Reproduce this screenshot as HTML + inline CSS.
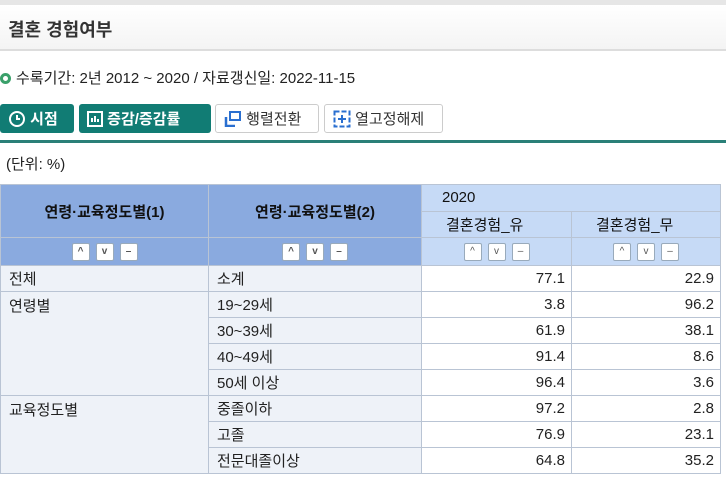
<!DOCTYPE html>
<html><head><meta charset="utf-8"><style>
*{margin:0;padding:0;box-sizing:border-box}
body{width:726px;height:480px;overflow:hidden;background:#fff;font-family:"Liberation Sans","Noto Sans CJK KR",sans-serif;color:#222;position:relative}
.top{position:absolute;left:0;top:0;width:726px;height:5px;background:#e6e6e6}
.title{position:absolute;left:0;top:5px;width:726px;height:46px;background:linear-gradient(#fff,#f4f4f4);border-bottom:2px solid #ddd;font-size:18px;font-weight:bold;padding:11px 0 0 8px;color:#333}
.info{position:absolute;left:0;top:67px;font-size:15px;color:#222}
.dot{display:inline-block;width:11px;height:11px;border-radius:50%;border:3px solid #3aa06a;margin-right:5px;vertical-align:-1px}
.btn{position:absolute;top:104px;height:29px;border-radius:3px;font-size:15px;display:flex;align-items:center;padding-left:8px}
.g{background:#117c74;color:#fff;font-weight:bold}
.w{background:#fff;border:1px solid #ccc;color:#333}
.line{position:absolute;left:0;top:140px;width:726px;height:3px;background:#2a8078}
.unit{position:absolute;left:6px;top:153px;font-size:15px}
table{position:absolute;left:0;top:184px;border-collapse:collapse;font-size:15px}
td,th{border:1px solid #b9c4d4;height:26px;padding:0 6px}
th{background:#8aaadf;color:#111;font-weight:bold}
th.l{background:#c6daf6;font-weight:normal;text-align:left;padding-left:20px}
tr.b th{background:#8aaadf;height:28px}
tr.b th.l{background:#c6daf6}
.sb{display:inline-block;width:18px;height:18px;background:#fff;border:1px solid #9ab;border-radius:2px;margin:0 3px;vertical-align:middle;font-size:10px;line-height:16px;text-align:center;color:#555}
td{background:#eef2f8;padding-left:8px}
td.n{background:#fff;text-align:right}
</style></head><body>
<div class="top"></div>
<div class="title">결혼 경험여부</div>
<div class="info"><span class="dot"></span>수록기간: 2년 2012 ~ 2020 / 자료갱신일: 2022-11-15</div>
<div class="btn g" style="left:0;width:74px"><svg width="18" height="18" viewBox="0 0 18 18"><circle cx="9" cy="9" r="7" fill="none" stroke="#fff" stroke-width="2"/><path d="M9 5v4h3" fill="none" stroke="#fff" stroke-width="2"/></svg>&nbsp;시점</div>
<div class="btn g" style="left:79px;width:132px"><svg width="16" height="16" viewBox="0 0 16 16"><rect x="1" y="1" width="14" height="14" fill="none" stroke="#fff" stroke-width="2"/><path d="M5 11V7M8 11V5M11 11V8" stroke="#fff" stroke-width="2"/></svg>&nbsp;증감/증감률</div>
<div class="btn w" style="left:215px;width:104px"><svg width="18" height="16" viewBox="0 0 18 16"><rect x="6" y="1" width="10" height="8" fill="none" stroke="#2a6fd0" stroke-width="2"/><path d="M2 6v9h9" fill="none" stroke="#2a6fd0" stroke-width="2.5"/></svg>&nbsp;행렬전환</div>
<div class="btn w" style="left:324px;width:119px"><svg width="18" height="18" viewBox="0 0 18 18"><rect x="1.5" y="1.5" width="15" height="15" fill="none" stroke="#2a6fd0" stroke-width="2" stroke-dasharray="5 2"/><path d="M9 5v8M5 9h8" stroke="#2a6fd0" stroke-width="2"/></svg>&nbsp;열고정해제</div>
<div class="line"></div>
<div class="unit">(단위: %)</div>
<table>
<tr><th rowspan="2" style="width:208px;height:53px">연령·교육정도별(1)</th><th rowspan="2" style="width:213px">연령·교육정도별(2)</th><th colspan="2" class="l">2020</th></tr>
<tr><th class="l" style="width:150px;padding-left:24px">결혼경험_유</th><th class="l" style="width:149px;padding-left:24px">결혼경험_무</th></tr>
<tr class="b"><th><span class="sb">^</span><span class="sb">v</span><span class="sb">–</span></th><th><span class="sb">^</span><span class="sb">v</span><span class="sb">–</span></th><th class="l" style="text-align:center;padding:0"><span class="sb">^</span><span class="sb">v</span><span class="sb">–</span></th><th class="l" style="text-align:center;padding:0"><span class="sb">^</span><span class="sb">v</span><span class="sb">–</span></th></tr>
<tr><td>전체</td><td>소계</td><td class="n">77.1</td><td class="n">22.9</td></tr>
<tr><td rowspan="4" style="vertical-align:top;padding-top:3px">연령별</td><td>19~29세</td><td class="n">3.8</td><td class="n">96.2</td></tr>
<tr><td>30~39세</td><td class="n">61.9</td><td class="n">38.1</td></tr>
<tr><td>40~49세</td><td class="n">91.4</td><td class="n">8.6</td></tr>
<tr><td>50세 이상</td><td class="n">96.4</td><td class="n">3.6</td></tr>
<tr><td rowspan="3" style="vertical-align:top;padding-top:3px">교육정도별</td><td>중졸이하</td><td class="n">97.2</td><td class="n">2.8</td></tr>
<tr><td>고졸</td><td class="n">76.9</td><td class="n">23.1</td></tr>
<tr><td>전문대졸이상</td><td class="n">64.8</td><td class="n">35.2</td></tr>
</table>
</body></html>
